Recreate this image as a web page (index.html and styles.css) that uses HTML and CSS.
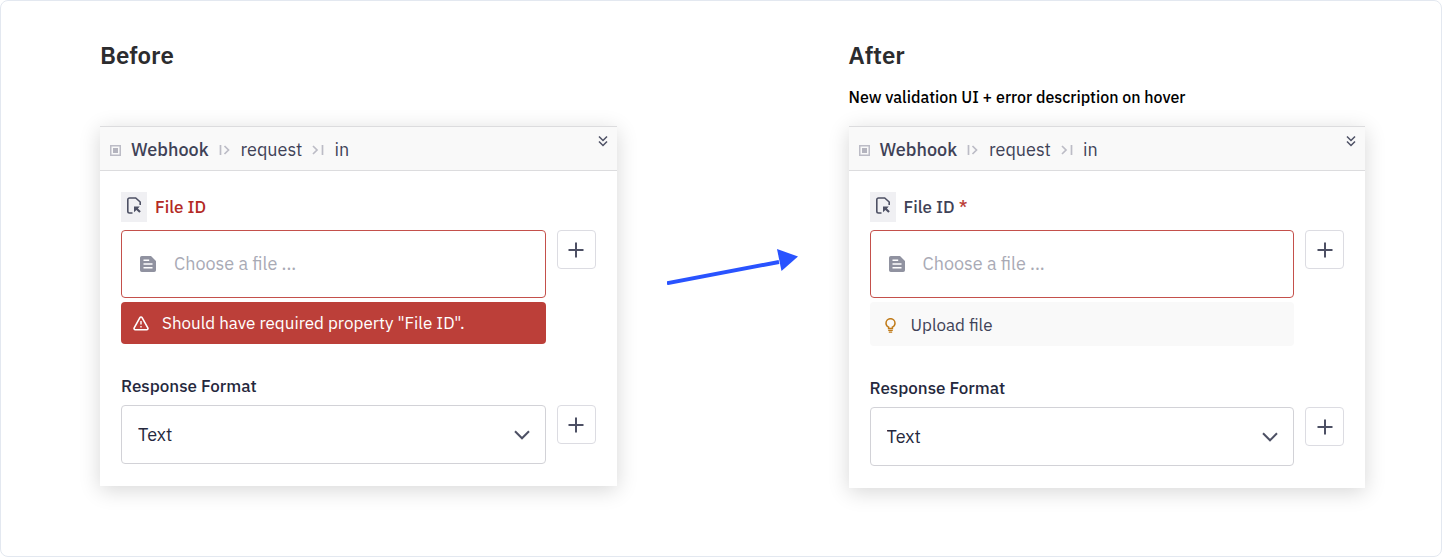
FILE: index.html
```
<!DOCTYPE html>
<html lang="en">
<head>
<meta charset="utf-8">
<title>Validation UI: before and after</title>
<link rel="stylesheet" href="styles.css">
</head>
<body>
<svg class="sprite" aria-hidden="true">
  <symbol id="i-node" viewBox="0 0 11 11"><path d="M.75.75h9.500v9.500h-9.500z" fill="none" stroke="#bcbcc6" stroke-width="1.500"/><path d="M3 3h5v5H3z" fill="#b4b4be"/></symbol>
  <symbol id="i-out" viewBox="0 0 12 12"><path d="M1.500 1v10M5.500 2l4 4-4 4" fill="none" stroke="#bcbcc6" stroke-width="1.700"/></symbol>
  <symbol id="i-in" viewBox="0 0 12 12"><path d="M10.500 1v10M1 2l4 4-4 4" fill="none" stroke="#bcbcc6" stroke-width="1.700"/></symbol>
  <symbol id="i-collapse" viewBox="0 0 10 12"><path d="M1 1.500l4 4 4-4M1 6.500l4 4 4-4" fill="none" stroke="#4d5064" stroke-width="1.500"/></symbol>
  <symbol id="i-fileref" viewBox="0 0 16 18"><path d="M6.500 16H3.500a1.700 1.700 0 0 1-1.700-1.700V2.700A1.700 1.700 0 0 1 3.500 1h6.200L14.200 5v3" fill="none" stroke="#4d5064" stroke-width="1.600"/><path d="M8 9.500h5.800l-1.900 1.900 2.900 2.900-1.500 1.500-2.900-2.900L8 15.300z" fill="#4d5064"/></symbol>
  <symbol id="i-doc" viewBox="0 0 16 16"><path d="M1.800 0H11l5 5v9.200a1.800 1.800 0 0 1-1.800 1.800H1.800A1.800 1.800 0 0 1 0 14.200V1.800A1.800 1.800 0 0 1 1.800 0z" fill="#9092a0"/><path d="M3.500 4.200h5.700M3.500 8h9M3.500 11.800h9" stroke="#fff" stroke-width="1.500"/></symbol>
  <symbol id="i-plus" viewBox="0 0 16 16"><path d="M8 .5v15M.5 8h15" stroke="#4d5064" stroke-width="2"/></symbol>
  <symbol id="i-chevron" viewBox="0 0 16 10"><path d="M1 1.300l7 7 7-7" fill="none" stroke="#4d5064" stroke-width="2"/></symbol>
  <symbol id="i-warn" viewBox="0 0 16 15"><path d="M6.900 1.600a1.250 1.250 0 0 1 2.200 0l5.700 10.300a1.200 1.200 0 0 1-1.100 1.800H2.300a1.200 1.200 0 0 1-1.100-1.800z" fill="none" stroke="#fff" stroke-width="1.600" stroke-linejoin="round"/><path d="M8 5v3.600M8 10v1.600" stroke="#fff" stroke-width="1.400"/></symbol>
  <symbol id="i-bulb" viewBox="0 0 11 15"><path d="M3.600 10.500V9.100A4.400 4.400 0 0 1 1 5.200 4.500 4.500 0 0 1 10 5.200 4.400 4.400 0 0 1 7.400 9.100V10.500z" fill="none" stroke="#c07a18" stroke-width="1.500"/><path d="M3.200 12.400h4.600M3.800 14.200h3.400" stroke="#c07a18" stroke-width="1.200"/></symbol>
</svg>
<main class="frame">
  <section class="column">
    <h2 class="title">Before</h2>
    <p class="subtitle"></p>
    <article class="panel">
      <header class="panel-head">
        <svg class="node-icon"><use href="#i-node"/></svg>
        <strong class="node">Webhook</strong>
        <svg class="port-icon"><use href="#i-out"/></svg>
        <span class="port">request</span>
        <svg class="port-icon"><use href="#i-in"/></svg>
        <span class="port">in</span>
        <button class="collapse" type="button" aria-label="Collapse"><svg><use href="#i-collapse"/></svg></button>
      </header>
      <div class="panel-body">
        <div class="label-row">
          <span class="type-badge"><svg><use href="#i-fileref"/></svg></span>
          <label class="file-label invalid" for="file-before">File ID</label>
        </div>
        <div class="field-row">
          <div class="stack">
            <button class="file-field" id="file-before" type="button"><svg><use href="#i-doc"/></svg><span>Choose a file ...</span></button>
            <div class="message error" role="alert"><svg class="warn-icon"><use href="#i-warn"/></svg><span>Should have required property "File ID".</span></div>
          </div>
          <button class="add" type="button" aria-label="Add file"><svg><use href="#i-plus"/></svg></button>
        </div>
        <label class="format-label" for="format-before">Response Format</label>
        <div class="field-row">
          <div class="select-wrap">
            <select class="select" id="format-before"><option>Text</option></select>
            <svg class="chevron"><use href="#i-chevron"/></svg>
          </div>
          <button class="add" type="button" aria-label="Add format"><svg><use href="#i-plus"/></svg></button>
        </div>
      </div>
    </article>
  </section>
  <svg class="arrow" viewBox="0 0 132 36" aria-hidden="true"><path d="M0 34.200L112 13" stroke="#2953ff" stroke-width="4"/><path d="M110 0l21 7.500L114.500 22z" fill="#2953ff"/></svg>
  <section class="column">
    <h2 class="title">After</h2>
    <p class="subtitle">New validation UI + error description on hover</p>
    <article class="panel">
      <header class="panel-head">
        <svg class="node-icon"><use href="#i-node"/></svg>
        <strong class="node">Webhook</strong>
        <svg class="port-icon"><use href="#i-out"/></svg>
        <span class="port">request</span>
        <svg class="port-icon"><use href="#i-in"/></svg>
        <span class="port">in</span>
        <button class="collapse" type="button" aria-label="Collapse"><svg><use href="#i-collapse"/></svg></button>
      </header>
      <div class="panel-body">
        <div class="label-row">
          <span class="type-badge"><svg><use href="#i-fileref"/></svg></span>
          <label class="file-label" for="file-after">File ID <span class="required">*</span></label>
        </div>
        <div class="field-row">
          <div class="stack">
            <button class="file-field" id="file-after" type="button"><svg><use href="#i-doc"/></svg><span>Choose a file ...</span></button>
            <div class="message hint"><svg class="bulb-icon"><use href="#i-bulb"/></svg><span>Upload file</span></div>
          </div>
          <button class="add" type="button" aria-label="Add file"><svg><use href="#i-plus"/></svg></button>
        </div>
        <label class="format-label" for="format-after">Response Format</label>
        <div class="field-row">
          <div class="select-wrap">
            <select class="select" id="format-after"><option>Text</option></select>
            <svg class="chevron"><use href="#i-chevron"/></svg>
          </div>
          <button class="add" type="button" aria-label="Add format"><svg><use href="#i-plus"/></svg></button>
        </div>
      </div>
    </article>
  </section>
</main>
</body>
</html>
```
FILE: styles.css
```
* { box-sizing: border-box; }
body {
  margin: 0;
  background: #fff;
  color: #3f4257;
  font-family: "IBM Plex Sans", Roboto, "Noto Sans", sans-serif;
}
svg { display: block; flex: none; }
button, select { font: inherit; color: inherit; cursor: pointer; }
.sprite { position: absolute; width: 0; height: 0; }
.frame {
  display: grid;
  grid-template-columns: 1fr 232px 1fr;
  min-height: calc(100vh - 1px);
  margin-right: 1px;
  padding: 38px 76px 64px 99px;
  border: 1px solid #e3e8f0;
  border-radius: 8px;
}
.title {
  margin: 0 0 14px;
  font-size: 24px;
  line-height: 32px;
  font-weight: 600;
  color: #2c2c2e;
}
.subtitle {
  margin: 0 0 17px;
  min-height: 24px;
  font-size: 16px;
  line-height: 24px;
  font-weight: 500;
  color: #000;
}
.arrow { width: 132px; height: 36px; margin-top: 210px; justify-self: center; }
.panel {
  background: #fff;
  box-shadow: 0 4px 20px rgba(0, 0, 0, .16);
}
.panel-head {
  display: flex;
  align-items: center;
  gap: 10px;
  height: 45px;
  padding: 3px 9px 0 10px;
  background: #f9f9f9;
  border: solid #dcdcde;
  border-width: 1px 0;
  font-size: 18px;
  line-height: 24px;
}
.node-icon { width: 11px; height: 11px; }
.port-icon { width: 12px; height: 12px; }
.node { font-weight: 500; }
.collapse {
  align-self: flex-start;
  margin: 5px 0 0 auto;
  padding: 0;
  border: 0;
  background: none;
}
.collapse svg { width: 10px; height: 12px; }
.panel-body { padding: 21px 21px 22px; }
.label-row { display: flex; align-items: center; gap: 8px; margin-bottom: 8px; }
.type-badge { padding: 5px 5px 7px; background: #f0f0f3; }
.type-badge svg { width: 16px; height: 18px; }
.file-label { font-size: 17px; line-height: 24px; font-weight: 500; }
.invalid { color: #b42a25; }
.required { color: #bc3f39; }
.field-row { display: grid; grid-template-columns: 1fr 39px; gap: 11px; align-items: start; }
.stack { display: grid; gap: 4px; }
.file-field {
  display: flex;
  align-items: center;
  gap: 18px;
  height: 68px;
  padding: 0 18px;
  border: 1px solid #c4504b;
  border-radius: 4px;
  background: #fff;
  color: #a9aab5;
  font-size: 18px;
  line-height: 24px;
}
.file-field svg { width: 16px; height: 16px; }
.message { display: flex; align-items: center; border-radius: 4px; font-size: 17px; line-height: 24px; }
.error { gap: 13px; padding: 9px 12px; background: #bc3f39; color: #fff; }
.hint { gap: 15px; padding: 11px 15px 9px; background: #f9f9f9; }
.warn-icon { width: 16px; height: 15px; }
.bulb-icon { width: 11px; height: 15px; }
.add {
  display: grid;
  place-items: center;
  height: 39px;
  padding: 0;
  border: 1px solid #dcdce2;
  border-radius: 4px;
  background: #fff;
}
.add svg { width: 16px; height: 16px; }
.format-label {
  display: block;
  margin: 30px 0 7px;
  font-size: 17px;
  line-height: 24px;
  font-weight: 500;
  color: #25283d;
}
.select-wrap { display: grid; align-items: center; }
.select-wrap > * { grid-area: 1 / 1; }
.select {
  appearance: none;
  width: 100%;
  height: 59px;
  padding: 0 48px 0 16px;
  border: 1px solid #d2d2d7;
  border-radius: 4px;
  background: #fff;
  color: #25283d;
  font-size: 18px;
}
.chevron { width: 16px; height: 10px; margin-right: 16px; justify-self: end; pointer-events: none; }
```
